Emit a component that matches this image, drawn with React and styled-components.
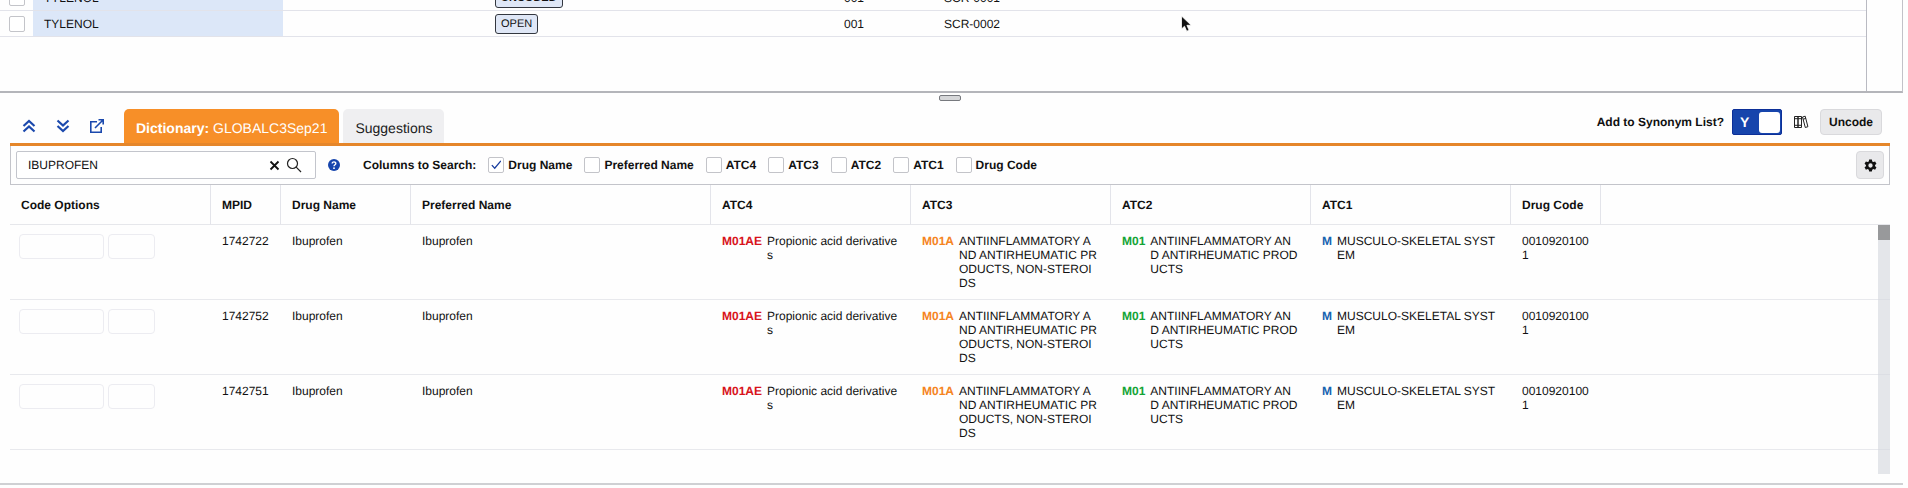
import React, { useState } from "react";
import styled, { createGlobalStyle } from "styled-components";

const GlobalStyle = createGlobalStyle`
  * { box-sizing: border-box; }
  body {
    margin: 0;
    background: #fefefe;
    color: #111;
    font: 12px/14px "Liberation Sans", Arial, sans-serif;
    text-rendering: geometricPrecision;
  }
  button, input { font: inherit; color: inherit; margin: 0; text-rendering: inherit; }
`;

const Page = styled.main`
  position: relative;
  padding-right: 5px;
`;

const TaskPanel = styled.section`
  display: flex;
  height: 93px;
  overflow: hidden;
  border-right: 1px solid #c2c2c8;
  border-bottom: 2px solid #b4b5ba;
`;

const TaskScroller = styled.div`
  flex: 1;
  min-width: 0;
  border-right: 1px solid #b9bac2;
`;

const Table = styled.table`
  width: 100%;
  table-layout: fixed;
  border-collapse: separate;
  border-spacing: 0;
`;

const TaskTable = styled(Table)`
  margin-top: -15px;
`;

const TaskGutter = styled.div`
  width: 35px;
`;

const Col = styled.col`
  width: ${(p) => (p.$w ? `${p.$w}px` : "auto")};
`;

const TaskCell = styled.td`
  height: 26px;
  padding: 0 12px;
  vertical-align: middle;
  border-bottom: 1px solid #e2e3ea;
`;

const TermCell = styled(TaskCell)`
  padding: 0 11px;
  background: #dce7f8;
`;

const CheckCell = styled(TaskCell)`
  padding: 0 0 0 9px;
`;

const Checkbox = styled.input.attrs({ type: "checkbox" })`
  appearance: none;
  display: grid;
  place-items: center;
  width: 16px;
  height: 16px;
  border: 1px solid #c3c4c9;
  border-radius: 2px;
  background: #fff;

  &:checked::before {
    content: "";
    width: 10px;
    height: 10px;
    background: #1b3fa0;
    clip-path: polygon(0 55%, 10% 47%, 33% 72%, 90% 5%, 100% 12%, 34% 92%);
  }
`;

const Badge = styled.span`
  display: inline-block;
  padding: 2px 5px;
  border: 1px solid #33373f;
  border-radius: 3px;
  background: #dfe7f6;
  font-size: 11px;
  font-weight: ${(p) => (p.$strong ? 700 : 400)};
`;

const CodingPanel = styled.section`
  display: flex;
  flex-direction: column;
  padding: 2px 13px 9px 10px;
  border-bottom: 2px solid #cfd0d3;
`;

const Handle = styled.div`
  align-self: center;
  width: 22px;
  height: 6px;
  border: 1px solid #77797e;
  border-radius: 2px;
  background: #d6d7d9;
`;

const Toolbar = styled.header`
  display: flex;
  align-items: flex-start;
  padding-top: 8px;
  border-bottom: 3px solid #e5862a;
`;

const IconButton = styled.button`
  display: inline-flex;
  align-items: center;
  justify-content: center;
  padding: 0;
  border: 0;
  background: none;
  cursor: pointer;
`;

const NavIcons = styled.div`
  display: flex;
  align-items: center;
  gap: 18px;
  height: 34px;
  padding: 0 19px 0 11px;
  color: #1b49ad;
`;

const Tabs = styled.div`
  display: flex;
  gap: 4px;
`;

const Tab = styled.button`
  padding: 11px 12px 7px;
  border: 0;
  border-radius: 5px 5px 0 0;
  background: ${(p) => (p.$active ? "#f78f28" : "#efeff1")};
  color: ${(p) => (p.$active ? "#fff" : "#1b1b1b")};
  font-size: 14px;
  line-height: 16px;
`;

const Actions = styled.div`
  display: flex;
  align-items: center;
  gap: 11px;
  margin-left: auto;
  padding-right: 8px;
`;

const SwitchLabel = styled.label`
  display: flex;
  align-items: center;
  gap: 8px;
  font-weight: 700;
`;

const Switch = styled.input.attrs({ type: "checkbox", role: "switch" })`
  appearance: none;
  display: flex;
  align-items: center;
  justify-content: space-between;
  width: 50px;
  height: 26px;
  padding: 0 1px 0 7px;
  border: 1px solid #0c2f98;
  border-radius: 2px;
  background: #1745ac;
  color: #fff;
  font-size: 14px;

  &::before { content: "Y"; }
  &::after {
    content: "";
    width: 21px;
    height: 21px;
    border-radius: 3px;
    background: #fff;
  }
  &:not(:checked)::before { content: "N"; }
`;

const GrayButton = styled.button`
  display: inline-flex;
  align-items: center;
  justify-content: center;
  height: ${(p) => (p.$square ? 28 : 26)}px;
  width: ${(p) => (p.$square ? "28px" : "auto")};
  padding: 0 ${(p) => (p.$square ? 0 : 8)}px;
  border: 1px solid #d9d9dc;
  border-radius: 4px;
  background: #e9e9eb;
  font-weight: 700;
`;

const FilterBar = styled.form`
  display: flex;
  align-items: center;
  height: 39px;
  padding: 0 5px;
  border: 1px solid #c3c4ca;
  border-top: 0;
`;

const SearchBox = styled.div`
  display: flex;
  align-items: center;
  gap: 6px;
  width: 300px;
  height: 28px;
  padding: 0 13px 0 11px;
  border: 1px solid #c3c5cc;
  border-radius: 2px;
  background: #fff;
`;

const SearchInput = styled.input`
  flex: 1;
  min-width: 0;
  padding: 0;
  border: 0;
  outline: 0;
  background: none;
`;

const HelpButton = styled(IconButton)`
  margin: 0 23px 0 12px;
`;

const ColumnChoices = styled.fieldset`
  display: flex;
  align-items: center;
  gap: 12px;
  margin: 0;
  padding: 0;
  border: 0;
  font-weight: 700;
`;

const Choice = styled.label`
  display: flex;
  align-items: center;
  gap: 4px;
`;

const Spacer = styled.div`
  flex: 1;
`;

const Results = styled.div`
  position: relative;
  padding-bottom: 24px;
`;

const HeadCell = styled.th`
  height: 40px;
  padding: 0 11px;
  text-align: left;
  vertical-align: middle;
  border-bottom: 1px solid #e6e7eb;
  border-right: ${(p) => (p.$last ? 0 : 1)}px solid #e3e4ea;
`;

const Cell = styled.td`
  height: 75px;
  padding: 9px 11px 0;
  vertical-align: top;
  word-break: break-all;
  border-bottom: 1px solid #e8e9ed;
`;

const OptionButtons = styled.div`
  display: flex;
  gap: 4px;
  margin-left: -2px;
`;

const OptionButton = styled.button`
  width: ${(p) => (p.$wide ? 85 : 47)}px;
  height: 25px;
  border: 1px solid #ececf1;
  border-radius: 4px;
  background: transparent;
`;

const AtcEntry = styled.div`
  display: flex;
  gap: 5px;
  padding-right: 2px;
`;

const AtcCode = styled.strong`
  flex: none;
  color: ${(p) => p.$color};
`;

const ScrollTrack = styled.div`
  position: absolute;
  top: 40px;
  right: 0;
  bottom: 0;
  width: 12px;
  background: rgba(214, 216, 222, 0.65);
`;

const ScrollThumb = styled.div`
  height: 15px;
  background: #98999b;
`;

const Pointer = styled.svg`
  position: absolute;
  left: 1180px;
  top: 15px;
`;

const DoubleChevron = ({ down }) => (
  <svg width="16" height="16" viewBox="0 0 16 16" fill="none" stroke="currentColor" strokeWidth="2.2">
    {down ? <path d="M2.5 2.5 8 7.5l5.5-5M2.5 8 8 13l5.5-5" /> : <path d="M2.5 8 8 3l5.5 5M2.5 13.5l5.5-5 5.5 5" />}
  </svg>
);

const OpenIcon = () => (
  <svg width="16" height="16" viewBox="0 0 16 16" fill="none" stroke="currentColor" strokeWidth="1.6">
    <path d="M8 3.800H1.800v10.400h10.400V9M6 10l8-8M9.500 1.800h4.700v4.700" />
  </svg>
);

const ClearIcon = () => (
  <svg width="11" height="11" viewBox="0 0 11 11" stroke="#111" strokeWidth="1.8">
    <path d="m1.500 1.500 8 8m0-8-8 8" />
  </svg>
);

const SearchIcon = () => (
  <svg width="16" height="16" viewBox="0 0 16 16" fill="none" stroke="#222" strokeWidth="1.2">
    <circle cx="6.500" cy="6.500" r="5" />
    <path d="m10.200 10.200 4.800 4.800" />
  </svg>
);

const HelpIcon = () => (
  <svg width="12" height="12" viewBox="0 0 12 12" fill="none">
    <circle cx="6" cy="6" r="6" fill="#1645ad" />
    <path d="M4.200 4.600c0-2.300 3.700-2.200 3.600 0C7.800 5.800 6 5.700 6 7.200" stroke="#fff" strokeWidth="1.4" />
    <circle cx="6" cy="9.200" r=".9" fill="#fff" />
  </svg>
);

const BooksIcon = () => (
  <svg width="16" height="14" viewBox="0 0 16 14" fill="none" stroke="#222" strokeWidth="1">
    <path d="M1.500 1.500H5v11H1.500zM5 1.500h3.500v11H5zM1.500 3.700h7M1.500 10.300h7M9.500 2l2.700-.8 2.700 10.500-2.600.8zM10.100 4.200l2.700-.8" />
  </svg>
);

const GearIcon = () => (
  <svg width="13" height="13" viewBox="0 0 24 24" fill="#111" fillRule="evenodd">
    <path d="M9.500 1h5l.7 3.400 2 1.200 3.300-1.200 2.500 4.300-2.600 2.200v2.300l2.600 2.200-2.500 4.300-3.300-1.200-2 1.200-.7 3.300h-5l-.7-3.300-2-1.200-3.300 1.200L1 15.400l2.600-2.200v-2.300L1 8.700l2.500-4.300 3.300 1.200 2-1.200zM12 8a4 4 0 1 0 0 8 4 4 0 0 0 0-8z" />
  </svg>
);

const tasks = [
  { term: "TYLENOL", status: "UNCODED", strong: true, form: "001", subject: "SCR-0001" },
  { term: "TYLENOL", status: "OPEN", strong: false, form: "001", subject: "SCR-0002" },
];

const searchColumns = ["Drug Name", "Preferred Name", "ATC4", "ATC3", "ATC2", "ATC1", "Drug Code"];

const resultColumns = [
  ["Code Options", 201],
  ["MPID", 70],
  ["Drug Name", 130],
  ["Preferred Name", 300],
  ["ATC4", 200],
  ["ATC3", 200],
  ["ATC2", 200],
  ["ATC1", 200],
  ["Drug Code", 90],
];

const atcLevels = [
  ["M01AE", "#d8131b", "Propionic acid derivatives"],
  ["M01A", "#f5841f", "ANTIINFLAMMATORY AND ANTIRHEUMATIC PRODUCTS, NON-STEROIDS"],
  ["M01", "#14a436", "ANTIINFLAMMATORY AND ANTIRHEUMATIC PRODUCTS"],
  ["M", "#1763b0", "MUSCULO-SKELETAL SYSTEM"],
];

const drugs = ["1742722", "1742752", "1742751"];

export default function App() {
  const [query, setQuery] = useState("IBUPROFEN");

  return (
    <>
      <GlobalStyle />
      <Page>
        <TaskPanel>
          <TaskScroller>
            <TaskTable>
              <colgroup>
                <Col $w={33} />
                <Col $w={250} />
                <Col $w={200} />
                <Col $w={349} />
                <Col $w={100} />
                <Col />
              </colgroup>
              <tbody>
                {tasks.map((t) => (
                  <tr key={t.subject}>
                    <CheckCell>
                      <Checkbox aria-label={`Select ${t.subject}`} />
                    </CheckCell>
                    <TermCell>{t.term}</TermCell>
                    <TaskCell />
                    <TaskCell>
                      <Badge $strong={t.strong}>{t.status}</Badge>
                    </TaskCell>
                    <TaskCell>{t.form}</TaskCell>
                    <TaskCell>{t.subject}</TaskCell>
                  </tr>
                ))}
              </tbody>
            </TaskTable>
          </TaskScroller>
          <TaskGutter />
        </TaskPanel>

        <CodingPanel>
          <Handle />
          <Toolbar>
            <NavIcons>
              <IconButton aria-label="Collapse up"><DoubleChevron /></IconButton>
              <IconButton aria-label="Expand down"><DoubleChevron down /></IconButton>
              <IconButton aria-label="Open in new window"><OpenIcon /></IconButton>
            </NavIcons>
            <Tabs role="tablist">
              <Tab role="tab" aria-selected="true" $active>
                <strong>Dictionary:</strong> GLOBALC3Sep21
              </Tab>
              <Tab role="tab" aria-selected="false">Suggestions</Tab>
            </Tabs>
            <Actions>
              <SwitchLabel>
                Add to Synonym List?
                <Switch defaultChecked />
              </SwitchLabel>
              <IconButton aria-label="Synonym lists"><BooksIcon /></IconButton>
              <GrayButton>Uncode</GrayButton>
            </Actions>
          </Toolbar>

          <FilterBar onSubmit={(e) => e.preventDefault()}>
            <SearchBox>
              <SearchInput
                aria-label="Search dictionary"
                value={query}
                onChange={(e) => setQuery(e.target.value)}
              />
              <IconButton type="button" aria-label="Clear" onClick={() => setQuery("")}>
                <ClearIcon />
              </IconButton>
              <IconButton type="submit" aria-label="Search"><SearchIcon /></IconButton>
            </SearchBox>
            <HelpButton type="button" aria-label="Help"><HelpIcon /></HelpButton>
            <ColumnChoices aria-label="Columns to Search">
              <span>Columns to Search:</span>
              {searchColumns.map((name, i) => (
                <Choice key={name}>
                  <Checkbox defaultChecked={i === 0} />
                  {name}
                </Choice>
              ))}
            </ColumnChoices>
            <Spacer />
            <GrayButton type="button" aria-label="Settings" $square><GearIcon /></GrayButton>
          </FilterBar>

          <Results>
            <Table>
              <colgroup>
                {resultColumns.map(([name, w]) => <Col key={name} $w={w} />)}
                <Col />
              </colgroup>
              <thead>
                <tr>
                  {resultColumns.map(([name]) => <HeadCell key={name} scope="col">{name}</HeadCell>)}
                  <HeadCell as="td" $last />
                </tr>
              </thead>
              <tbody>
                {drugs.map((id) => (
                  <tr key={id}>
                    <Cell>
                      <OptionButtons>
                        <OptionButton $wide aria-label={`Code ${id}`} />
                        <OptionButton aria-label={`Code and add ${id}`} />
                      </OptionButtons>
                    </Cell>
                    <Cell>{id}</Cell>
                    <Cell>Ibuprofen</Cell>
                    <Cell>Ibuprofen</Cell>
                    {atcLevels.map(([code, color, text]) => (
                      <Cell key={code}>
                        <AtcEntry>
                          <AtcCode $color={color}>{code}</AtcCode>
                          <span>{text}</span>
                        </AtcEntry>
                      </Cell>
                    ))}
                    <Cell>00109201001</Cell>
                    <Cell />
                  </tr>
                ))}
              </tbody>
            </Table>
            <ScrollTrack>
              <ScrollThumb />
            </ScrollTrack>
          </Results>
        </CodingPanel>

        <Pointer width="14" height="18" viewBox="0 0 14 18" aria-hidden="true">
          <path d="M1.500 1v13l3-2.800 2.200 5 2.400-1-2.200-4.900h4.300z" fill="#111" stroke="#fff" strokeWidth=".8" />
        </Pointer>
      </Page>
    </>
  );
}
